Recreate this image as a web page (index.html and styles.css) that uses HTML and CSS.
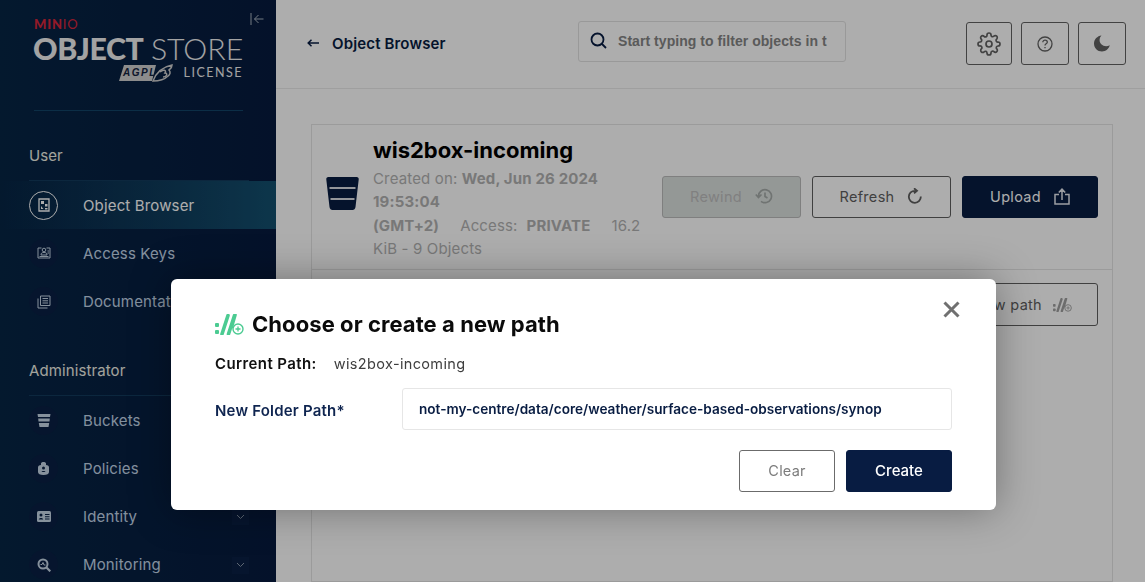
FILE: index.html
```html
<!DOCTYPE html>
<html lang="en">
<head>
<meta charset="utf-8">
<title>MinIO Object Store</title>
<link rel="stylesheet" href="styles.css">
</head>
<body>
<div class="app">
  <aside class="sidebar">
    <div class="brand">
      <div class="brand-minio"><b>MIN</b><span>IO</span></div>
      <div class="brand-name"><b>OBJECT</b> <span>STORE</span></div>
      <div class="brand-license">
        <svg class="agpl" width="54" height="18" viewBox="0 0 54 18">
          <path d="M5 1H37L33 17H0Z" fill="#cfcfcf"/>
          <text x="4" y="12" class="agpl-text">AGPL</text>
          <path d="M34 17C37 9 43 3 53 1C53 4 51 5 50 6C52 8 51 11 49 12C46 15 40 17 34 17Z" fill="none" stroke="#cfcfcf" stroke-width="1.5"/>
          <path d="M41 8C44 5 48 6 46 9C49 9 48 13 44 13" fill="none" stroke="#cfcfcf" stroke-width="1.5"/>
        </svg>
        <span>LICENSE</span>
      </div>
      <button class="collapse" aria-label="Collapse">
        <svg width="14" height="14" viewBox="0 0 14 14" fill="none" stroke="#a9b4c0" stroke-width="1"><path d="M1 1V13M13.5 7H4.500M8.500 3L4.500 7L8.500 11"/></svg>
      </button>
    </div>
    <div class="nav-title">User</div>
    <nav class="nav">
      <a class="nav-item active"><span class="nav-icon"><svg width="12" height="14" viewBox="0 0 12 14"><path d="M1 1H11V13H1Z" fill="none" stroke="#fff" stroke-width="1.300"/><path d="M3 3H6V6H3ZM7 6H9.500V8.500H7ZM3 8L5.500 11H3ZM7 10H9.500V11.500H7Z" fill="#fff"/></svg></span><span>Object Browser</span></a>
      <a class="nav-item"><span class="nav-icon"><svg width="14" height="12" viewBox="0 0 14 12" fill="none" stroke="#c6d6e6" stroke-width="1"><path d="M4.500 1H1V11H13V1H9.500"/><circle cx="7" cy="3" r="1.800"/><path d="M4 8C4 6 5 5.500 7 5.500S10 6 10 8ZM2.500 9.500H11.500M10.500 4H12M10.500 6H12"/></svg></span><span>Access Keys</span></a>
      <a class="nav-item"><span class="nav-icon"><svg width="14" height="14" viewBox="0 0 14 14" fill="none" stroke="#c6d6e6" stroke-width="1"><path d="M3.500 1H13V10.500H3.500ZM1 3.500V13H10.500M5.500 3.500H11M5.500 5.800H11M5.500 8H11"/></svg></span><span>Documentation</span></a>
    </nav>
    <div class="nav-title admin">Administrator</div>
    <nav class="nav">
      <a class="nav-item"><span class="nav-icon"><svg width="14" height="13" viewBox="0 0 14 13"><path d="M0.500 0H13.500L13 3H1ZM1.200 4.500H12.800L12.500 7.500H1.500ZM1.800 9H12.200L11.500 13H2.500Z" fill="#c6d6e6"/></svg></span><span>Buckets</span></a>
      <a class="nav-item"><span class="nav-icon"><svg width="11" height="14" viewBox="0 0 11 14"><path d="M3 4V2.500C3 0.500 8 0.500 8 2.500V4C10 4 11 5 11 6.500V11C11 13 9 14 5.500 14S0 13 0 11V6.500C0 5 1 4 3 4Z" fill="#c6d6e6"/><circle cx="5.500" cy="7" r="1.500" fill="#0b2347"/><path d="M3.500 11C3.500 9.500 7.500 9.500 7.500 11Z" fill="#0b2347"/></svg></span><span>Policies</span></a>
      <a class="nav-item"><span class="nav-icon"><svg width="14" height="11" viewBox="0 0 14 11"><rect width="14" height="11" rx="1.500" fill="#c6d6e6"/><circle cx="4" cy="4" r="1.500" fill="#0b2347"/><path d="M1.800 8.500C1.800 6.500 6.200 6.500 6.200 8.500ZM8 3H12.500V4H8ZM8 5.200H12.500V6.200H8ZM8 7.400H12.500V8.400H8Z" fill="#0b2347"/></svg></span><span>Identity</span><span class="chev"><svg width="9" height="6" viewBox="0 0 9 6" fill="none" stroke="#8a99aa" stroke-width="1"><path d="M1 1L4.500 4.500L8 1"/></svg></span></a>
      <a class="nav-item"><span class="nav-icon"><svg width="14" height="14" viewBox="0 0 14 14" fill="none" stroke="#c6d6e6"><circle cx="6" cy="6" r="4.500" stroke-width="2"/><path d="M9.500 9.500L13.300 13.300" stroke-width="2.200"/><path d="M3.500 6.500H5L6 4.500L7 7H8.500" stroke-width="1"/></svg></span><span>Monitoring</span><span class="chev"><svg width="9" height="6" viewBox="0 0 9 6" fill="none" stroke="#8a99aa" stroke-width="1"><path d="M1 1L4.500 4.500L8 1"/></svg></span></a>
    </nav>
  </aside>

  <main class="main">
    <header class="topbar">
      <div class="crumb">
        <svg width="12" height="8" viewBox="0 0 12 8" fill="none" stroke="#081c42" stroke-width="1.500"><path d="M12 4H1.500M4.500 0.800L1.200 4L4.500 7.200"/></svg>
        <span>Object Browser</span>
      </div>
      <div class="search">
        <svg width="17" height="17" viewBox="0 0 17 17" fill="none" stroke="#081c42" stroke-width="1.800"><circle cx="7.500" cy="7.500" r="6"/><path d="M12 12L16 16"/></svg>
        <span>Start typing to filter objects in t</span>
      </div>
      <div class="top-actions">
        <button class="icon-btn gear"><svg width="24" height="24" viewBox="0 0 24 24" fill="none" stroke="#626262" stroke-width="1.700" stroke-linejoin="round"><circle cx="12" cy="12" r="3"/><path d="M19.400 15a1.650 1.650 0 0 0 .33 1.820l.06.06a2 2 0 1 1-2.830 2.830l-.06-.06a1.650 1.650 0 0 0-2.900 1.170V21a2 2 0 1 1-4 0v-.09a1.650 1.650 0 0 0-2.800-1.170l-.06.06a2 2 0 1 1-2.830-2.830l.06-.06A1.650 1.650 0 0 0 3.090 14H3a2 2 0 1 1 0-4h.09a1.650 1.650 0 0 0 1.170-2.800l-.06-.06A2 2 0 1 1 7.030 4.310l.06.06A1.650 1.650 0 0 0 10 3.200V3a2 2 0 1 1 4 0v.09a1.650 1.650 0 0 0 2.800 1.170l.06-.06a2 2 0 1 1 2.830 2.830l-.06.06A1.650 1.650 0 0 0 20.910 10H21a2 2 0 1 1 0 4h-.09a1.650 1.650 0 0 0-1.510 1z"/></svg></button>
        <button class="icon-btn"><svg width="16" height="16" viewBox="0 0 16 16" fill="none" stroke="#626262" stroke-width="1.300"><circle cx="8" cy="8" r="7"/><path d="M5.800 6.200C5.800 3.500 10.300 3.500 10.300 6.200C10.300 7.800 8 7.800 8 9.500" /><path d="M8 11V12.300"/></svg></button>
        <button class="icon-btn"><svg width="16" height="17" viewBox="0 0 16 17"><path d="M7.500 0.500C5 3 5 7 7.300 9.300C9.500 11.500 13 11.800 15.800 10.300C14.800 14 11.800 16.500 8 16.500C3.500 16.500 0 13 0 8.500C0 4.300 3.300 1 7.500 0.500Z" fill="#626262"/></svg></button>
      </div>
    </header>

    <section class="content">
      <div class="bucket-card">
        <svg class="bucket-icon" width="33" height="33" viewBox="0 0 33 33"><path d="M2.500 0H30.500Q33 0 32.700 2.500L29.500 30Q29 33 26.500 33H6.500Q4 33 3.500 30L0.300 2.500Q0 0 2.500 0Z" fill="#081c42"/><path d="M3.500 11H29.500M4.500 22H28.500" stroke="#fff" stroke-opacity=".85" stroke-width="2"/></svg>
        <div class="bucket-info">
          <h1>wis2box-incoming</h1>
          <p>Created on: <b>Wed, Jun 26 2024<br>19:53:04<br>(GMT+2)</b><span class="gap">Access:</span><b class="priv">PRIVATE</b><span class="gap size">16.2<br>KiB - 9 Objects</span></p>
        </div>
        <div class="bucket-actions">
          <button class="btn disabled">Rewind <svg width="18" height="16" viewBox="0 0 18 16" fill="none" stroke="#a5aba9" stroke-width="1.700"><path d="M3.500 8A6.500 6.500 0 1 1 6 13.300M0.800 6.500L3.500 9.500L6.500 6.500M10 4.500V8.500L12.500 10"/></svg></button>
          <button class="btn outline">Refresh <svg width="16" height="17" viewBox="0 0 16 17" fill="none" stroke="#5f5f5f" stroke-width="1.800"><path d="M13.800 8.500A6 6 0 1 1 8 2.800H10M7 0.300L10 2.800L7 5.300"/></svg></button>
          <button class="btn primary">Upload <svg width="16" height="17" viewBox="0 0 16 17" fill="none" stroke="#e6e9ef" stroke-width="1.500"><path d="M5 6.500H1V16H15V6.500H11M8 12V1.500M4.800 4.500L8 1.200L11.200 4.500"/></svg></button>
        </div>
      </div>
      <div class="list-panel">
        <button class="btn outline new-path">Create new path
          <svg width="19" height="14" viewBox="0 0 29 21"><use href="#path-mark"/></svg>
        </button>
      </div>
    </section>
  </main>
</div>

<div class="overlay"></div>

<div class="modal" role="dialog">
  <button class="close" aria-label="Close"><svg width="17" height="17" viewBox="0 0 17 17" stroke="#707070" stroke-width="3" fill="none"><path d="M1.500 1.500L15.500 15.500M15.500 1.500L1.500 15.500"/></svg></button>
  <h2>
    <svg width="29" height="21" viewBox="0 0 29 21" class="path-mark">
      <defs><g id="path-mark">
        <rect x="0" y="9" width="4" height="4" rx="1" fill="currentColor"/>
        <rect x="0" y="16" width="4" height="4" rx="1" fill="currentColor"/>
        <path d="M7 20L13 1.500M13.500 20L19.500 1.500M20 1L16.500 13" stroke="currentColor" stroke-width="3.600" stroke-linecap="round" fill="none"/>
        <circle cx="23" cy="15" r="5" fill="#fff" stroke="currentColor" stroke-width="1.400"/>
        <path d="M23 12.500V17.500M20.500 15H25.500" stroke="currentColor" stroke-width="1.300"/>
      </g></defs>
      <use href="#path-mark"/>
    </svg>
    <span>Choose or create a new path</span>
  </h2>
  <div class="current"><b>Current Path:</b><span>wis2box-incoming</span></div>
  <div class="field">
    <label>New Folder Path*</label>
    <div class="input">not-my-centre/data/core/weather/surface-based-observations/synop</div>
  </div>
  <div class="modal-actions">
    <button class="btn clear">Clear</button>
    <button class="btn primary create">Create</button>
  </div>
</div>
</body>
</html>
```

FILE: styles.css
```css
* { box-sizing: border-box; }
html, body { margin: 0; height: 100%; overflow: hidden; }
body { font-family: Inter, "Liberation Sans", sans-serif; background: #fff; color: #081c42; }
button { font-family: inherit; }
.app { display: flex; height: 582px; overflow: hidden; }

.sidebar { width: 276px; flex: none; background: linear-gradient(90deg, #062545 0%, #071a3e 100%); color: #c2d5e8; padding-left: 29px; display: flex; flex-direction: column; overflow: hidden; }
.brand { position: relative; flex: none; height: 111px; margin: 0 33px 0 5px; border-bottom: 1px solid #134567; padding-top: 17px; color: #f0f0f0; }
.brand-minio { font: 13px/14px Lato, sans-serif; color: #d9263c; letter-spacing: .8px; }
.brand-minio b { font-weight: 900; }
.brand-minio span { font-weight: 400; }
.brand-name { font: 30.300px/30px Lato, sans-serif; white-space: nowrap; margin-top: 2px; margin-left: -1px; letter-spacing: -.4px; }
.brand-name b { font-weight: 900; }
.brand-name span { font-weight: 300; letter-spacing: 0; }
.brand-license { display: flex; align-items: center; justify-content: flex-end; gap: 10px; margin-top: 1px; font: 12.500px/18px Lato, sans-serif; letter-spacing: 1.500px; }
.agpl-text { font: italic 700 10px "Liberation Sans", sans-serif; fill: #13233f; }
.collapse { position: absolute; left: 216px; top: 12px; padding: 0; border: 0; background: none; line-height: 0; }

.nav-title { flex: none; height: 70px; width: 220px; padding-top: 35px; font-size: 15px; line-height: 20px; color: #f0f0e6; border-bottom: 1px solid #123a5c; letter-spacing: .1px; }
.nav-title.admin { height: 70px; }
.nav { flex: none; display: flex; flex-direction: column; margin-left: -29px; }
.nav-item { position: relative; display: flex; align-items: center; height: 48.300px; padding-left: 29px; gap: 25px; font-size: 15px; letter-spacing: .15px; color: #c2d5e8; white-space: nowrap; }
.nav-item.active { color: #fff; background: linear-gradient(90deg, rgba(20, 80, 111, 0) 0%, #14506f 100%); }
.nav-icon { width: 29px; height: 29px; flex: none; border-radius: 50%; background: #0a2044; display: flex; align-items: center; justify-content: center; }
.active .nav-icon { background: none; border: 1px solid #fff; }
.chev { position: absolute; left: 232px; top: 16px; width: 17px; height: 17px; background: #0a2044; display: flex; align-items: center; justify-content: center; }

.main { flex: 1; min-width: 0; display: flex; flex-direction: column; }
.topbar { height: 89px; flex: none; display: flex; align-items: flex-start; border-bottom: 1px solid #eaeaea; padding: 21px 19px 0 31px; }
.crumb { width: 271px; display: flex; align-items: center; gap: 13px; height: 44px; font-size: 15px; font-weight: 600; letter-spacing: .15px; }
.search { width: 268px; height: 41px; display: flex; align-items: center; gap: 11px; padding: 0 0 2px 11px; border: 1px solid #e2e2e2; border-radius: 3px; font: 700 14px "Liberation Sans", sans-serif; letter-spacing: .05px; color: #858585; white-space: nowrap; overflow: hidden; }
.top-actions { margin-left: auto; display: flex; gap: 9px; padding-top: 1px; }
.icon-btn { width: 48px; height: 43px; background: none; border: 1px solid #626262; border-radius: 3px; padding: 0; display: flex; align-items: center; justify-content: center; }
.icon-btn.gear { width: 46px; }

.content { flex: 1; min-height: 0; padding: 35px 32px 0 35px; display: flex; flex-direction: column; }
.bucket-card { height: 146px; flex: none; display: flex; align-items: flex-start; border: 1px solid #e5e5e5; padding-left: 14px; }
.bucket-icon { margin-top: 52px; flex: none; }
.bucket-info { width: 272px; margin-left: 14px; padding-top: 10px; }
.bucket-info h1 { margin: 0 0 2px; font-size: 22px; line-height: 30px; font-weight: 700; color: #000; }
.bucket-info p { margin: 0; font-size: 15px; line-height: 23.300px; letter-spacing: .15px; color: #b2b2b2; white-space: nowrap; }
.bucket-info b { font-weight: 700; }
.gap { margin-left: 21px; }
.priv { margin-left: 9px; }
.size { margin-left: 21px; }
.bucket-actions { margin: 51px 0 0 17px; display: flex; gap: 11px; }

.btn { height: 42px; display: inline-flex; align-items: center; justify-content: center; gap: 13px; border-radius: 3px; font-size: 14px; padding: 0 0 2px; white-space: nowrap; }
.btn svg { flex: none; }
.bucket-actions .btn { width: 139px; font-size: 14.500px; letter-spacing: .3px; }
.bucket-actions .primary { width: 136px; }
.disabled { background: #dbe0de; border: 1px solid #bbb; color: #bdbdbd; }
.outline { background: #fff; border: 1px solid #5f5f5f; color: #5f5f5f; }
.primary { background: #081c42; border: 1px solid #081c42; color: #fff; }

.list-panel { flex: 1; border: 1px solid #e5e5e5; border-top: 0; display: flex; justify-content: flex-end; align-items: flex-start; padding: 13px 14px 0 0; }
.new-path { width: 260px; height: 43px; justify-content: flex-end; padding: 0 25px 0 0; gap: 11px; font-size: 14.500px; letter-spacing: .3px; color: #5f5f5f; }
.new-path svg { color: #a0a0a0; }

.overlay { position: fixed; inset: 0; background: rgba(0, 0, 0, .32); }
.modal { position: absolute; left: 171px; top: 279px; width: 825px; height: 231px; background: #fff; border-radius: 6px; box-shadow: 0 0 40px rgba(0, 0, 0, .35); padding: 32px 44px 0; color: #000; }
.close { position: absolute; right: 36px; top: 22px; padding: 0; border: 0; background: none; line-height: 0; }
.modal h2 { display: flex; align-items: center; gap: 8px; margin: 0; height: 26px; font-size: 22px; font-weight: 700; line-height: 26px; letter-spacing: .07px; color: #0b0b0b; }
.path-mark { color: #4ccb92; flex: none; margin-top: 1px; }
.current { display: flex; gap: 17px; align-items: center; margin-top: 16px; height: 20px; font-size: 14.500px; }
.current b { font-weight: 600; color: #111; font-size: 15px; letter-spacing: .4px; }
.current span { color: #3e3e3e; letter-spacing: .35px; }
.field { display: flex; align-items: center; margin-top: 15px; }
.field label { width: 187px; padding-top: 2px; font-size: 15px; font-weight: 600; color: #0f2550; letter-spacing: .2px; }
.input { width: 550px; height: 42px; display: flex; align-items: center; padding: 0 0 1px 16px; border: 1px solid #e6e6e6; border-radius: 3px; font-size: 13.600px; font-weight: 600; color: #081c42; white-space: nowrap; }
.modal-actions { display: flex; justify-content: flex-end; gap: 11px; margin-top: 20px; }
.clear { width: 96px; background: #fff; border: 1px solid #6b6b6b; color: #7d7d7d; font-size: 14.500px; letter-spacing: .2px; }
.create { width: 106px; font-size: 15px; font-weight: 500; }
```
